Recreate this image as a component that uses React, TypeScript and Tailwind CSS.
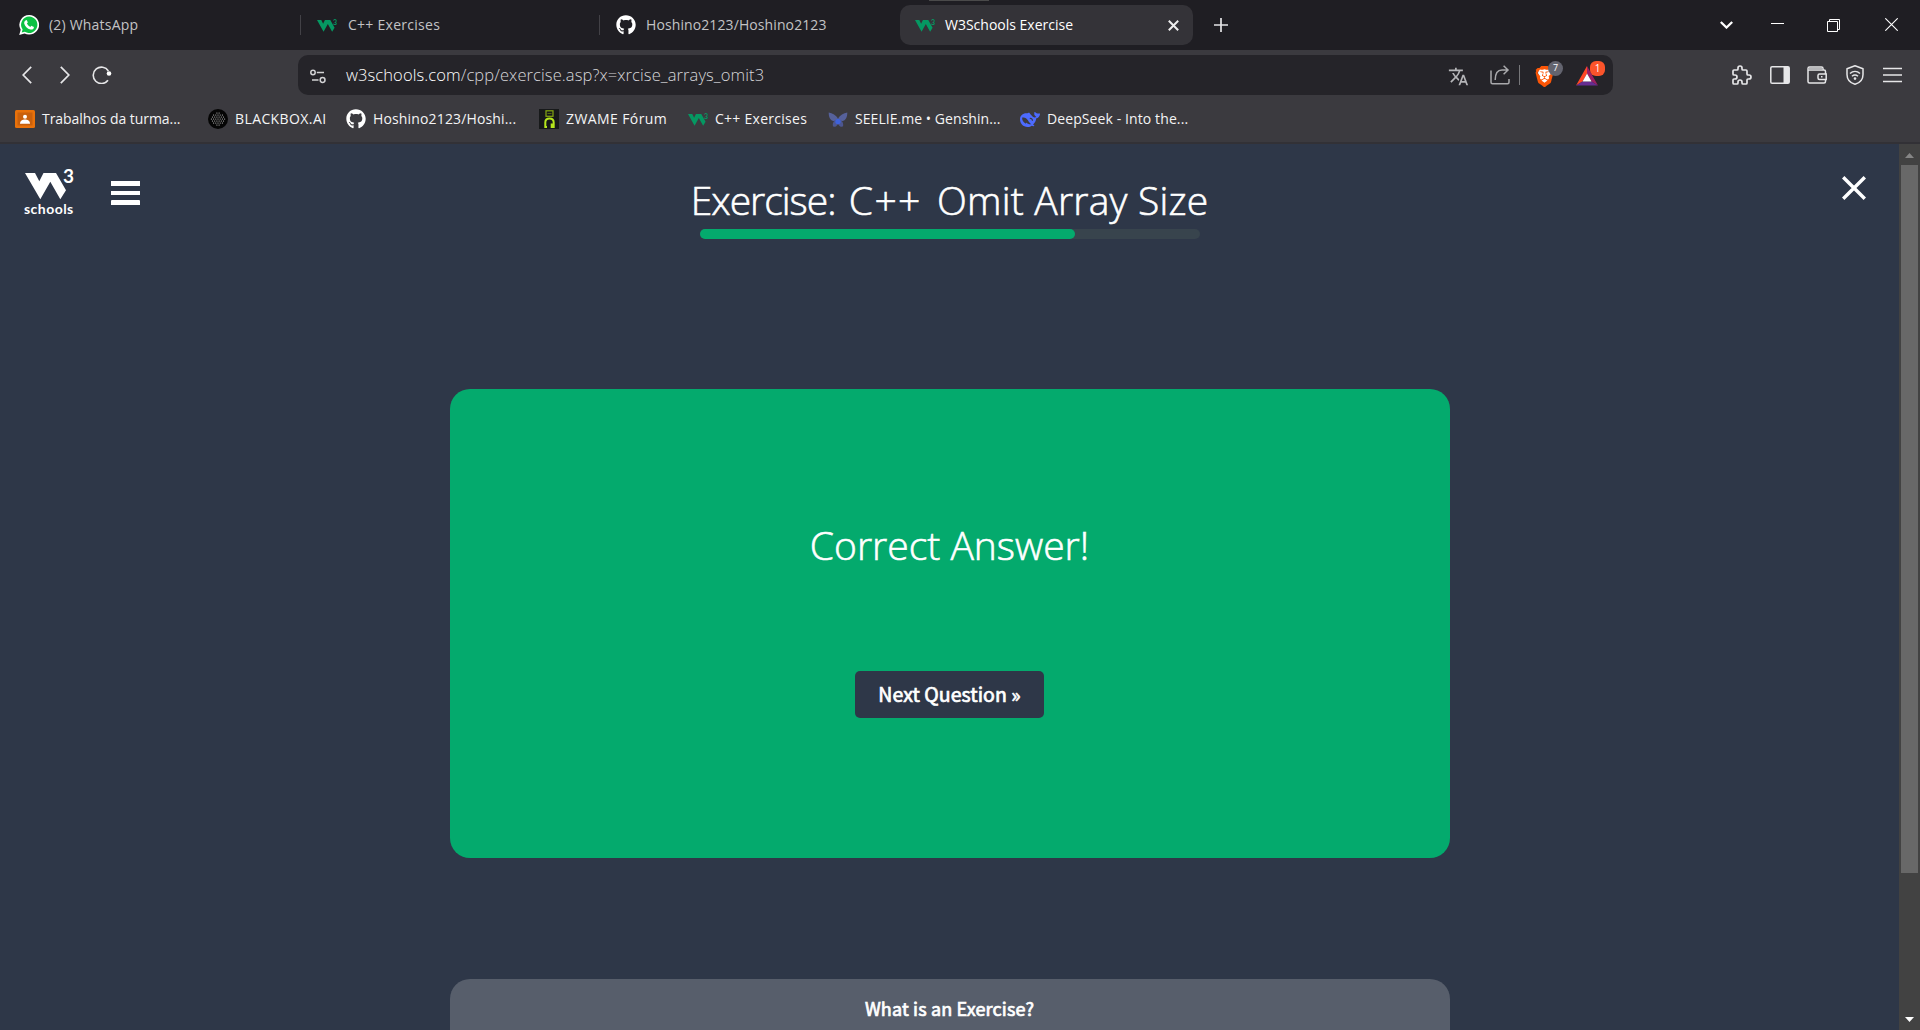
import React from 'react';
import { FaGithub } from 'react-icons/fa';
import { SiBrave } from 'react-icons/si';
import { MdTranslate } from 'react-icons/md';

type P = { className?: string };

const W3Mark = ({ className = '' }: P) => (
  <svg viewBox="0 0 42 27" className={className} fill="currentColor">
    <path d="M0 0H10L14.3 8.3L18.5 0H31L41 17.3L35.3 26.3L25.3 8.8L15.3 26.3Z" />
  </svg>
);

const W3Favicon = () => (
  <span className="flex h-5 w-5 shrink-0 items-start pt-[4px] font-['Lato'] text-[#059862]">
    <svg viewBox="0 0 42 27" className="mt-px h-[12px] w-[18px] shrink-0" fill="currentColor" preserveAspectRatio="none">
      <path d="M0 0H10L14.3 8.3L18.5 0H31L41 17.3L35.3 26.3L25.3 8.8L15.3 26.3Z" />
    </svg>
    <span className="-ml-[2px] -mt-px text-[7px] font-bold leading-[8px]">3</span>
  </span>
);

const WhatsApp = () => (
  <svg viewBox="0 0 20 20" className="h-5 w-5 shrink-0">
    <path d="M10.2 0a9.8 9.8 0 1 1-4.6 18.4L.2 20l1.5-5.3A9.8 9.8 0 0 1 10.2 0Z" fill="#fff" />
    <path d="M10.2 1.6a8.2 8.2 0 1 1-4.3 15.2L2.7 17.6l.9-3.1A8.2 8.2 0 0 1 10.2 1.6Z" fill="#0cc143" />
    <path d="M7 5.2c.5-.2.8 0 1 .4l.7 1.6c.2.5-.6 1.1-.8 1.4.8 1.5 1.9 2.6 3.500 3.300.4-.3.8-1.200 1.300-1l1.800.9c.5.3.4.6.3 1.100-.4 1.300-1.900 1.900-3.300 1.600-3.300-.8-5.600-3.200-6.300-6.100C5 7 5.700 5.700 7 5.200Z" fill="#fff" />
  </svg>
);

const Classroom = () => (
  <svg viewBox="0 0 20 18" className="h-[18px] w-5 shrink-0">
    <rect width="20" height="18" rx="1.500" fill="#e8710a" />
    <rect x="2.500" y="2.500" width="15" height="13" fill="#c9600c" />
    <circle cx="10" cy="6.800" r="2" fill="#fff" />
    <path d="M5 13.800c0-3.200 2.500-4.300 5-4.300s5 1.100 5 4.300Z" fill="#fff" />
  </svg>
);

const dots = [-3, -2, -1, 0, 1, 2, 3].flatMap((r) =>
  [-3, -2, -1, 0, 1, 2, 3].map((c) => [10 + c * 2.2 + (r % 2 ? 1.1 : 0), 10 + r * 2]),
).filter(([x, y]) => Math.hypot(x - 10, y - 10) < 6.7);

const Blackbox = () => (
  <svg viewBox="0 0 20 20" className="h-5 w-5 shrink-0">
    <circle cx="10" cy="10" r="10" fill="#050505" />
    {dots.map(([x, y]) => <circle key={`${x}-${y}`} cx={x} cy={y} r=".6" fill="#ccc" />)}
  </svg>
);

const Zwame = () => (
  <svg viewBox="0 0 20 20" className="h-5 w-5 shrink-0" fill="none">
    <rect width="20" height="20" fill="#17191a" />
    <rect x="7" y="1.800" width="7" height="5.500" stroke="#86a812" strokeWidth="1.200" />
    <path d="M8.500 4.500h4" stroke="#52680e" />
    <path d="M8 18H6.300V13.500C6.300 10.800 8 9.400 10.500 9.400s4.200 1.400 4.200 4.100V18H12.700V14.500" stroke="#b5e61d" strokeWidth="2" />
  </svg>
);

const Butterfly = () => (
  <svg viewBox="0 0 20 20" className="h-5 w-5 shrink-0">
    <path d="M10 9.500C8 6.500 4.500 4 .7 3.500c0 4.500 1.300 8 5.300 8.700Zm0 0c2-3 5.500-5.500 9.300-6 0 4.500-1.300 8-5.300 8.700Z" fill="#56619b" />
    <path d="M10 10c-3 1-5.500 2.700-5.200 6.500.3 2 3.200 2 5.200-1.500 2 3.500 4.900 3.500 5.200 1.500.3-3.800-2.200-5.500-5.200-6.500Z" fill="#4c5690" />
    <circle cx="10" cy="12.500" r="2.700" fill="#3e62dc" />
  </svg>
);

const DeepSeek = () => (
  <svg viewBox="0 0 20 20" className="h-5 w-5 shrink-0">
    <path d="M19.800 4.300c-.9.500-1.500.1-2.200.1-1.500.1-1.700-1.500-3.300-1.500.2 1.600-.3 2.200.2 3.200.4.9 1.200 1.200 1.800 1.900-1.300.7-2.300.5-3.500-.3C10.600 5.900 10 4.600 9 3.600c-.8.600-1.200.9-2.300.7C3 4.100 0 6.500 0 10.300c0 4.300 3.200 7.700 7.500 7.700 2 0 3.200-.6 4.300-1.300.9.500 2.300.7 2.600.1.200-.4-1.100-.9-1.300-1.400 2-1.700 3-4 3.200-6.100 1.900-.3 3.400-1.900 3.700-4.100Z" fill="#4d6bfe" />
    <path d="M2.200 8.600c2.600-.5 4.400.6 5.700 2.700 1 1.600 2 3.100 3.500 3.900-2.400.4-3.800-.6-4.700-1.200-.7-.5-.9.100-.7.800-2.800-1.300-4.200-3.700-3.800-6.200Z" fill="#3b3a3f" />
    <path d="M9.800 9.500c1.200-.4 2.600.4 2.700 2.200" stroke="#3b3a3f" strokeWidth="1.200" fill="none" />
  </svg>
);

const GitHub = () => <FaGithub className="h-5 w-5 shrink-0 text-white" />;

const tabs = [
  { icon: <WhatsApp />, title: '(2) WhatsApp', gap: 'ml-[10px]', track: 'tracking-[0.2px]' },
  { icon: <W3Favicon />, title: 'C++ Exercises', gap: 'ml-[11px]', track: 'tracking-[0.27px]' },
  { icon: <GitHub />, title: 'Hoshino2123/Hoshino2123', gap: 'ml-[10px]', track: 'tracking-[0.1px]' },
];

const bookmarks = [
  { icon: <Classroom />, title: 'Trabalhos da turma...', box: 'w-[193px]', track: 'tracking-[-0.05px]' },
  { icon: <Blackbox />, title: 'BLACKBOX.AI', box: 'w-[138px]', track: 'tracking-[0.4px]' },
  { icon: <GitHub />, title: 'Hoshino2123/Hoshi...', box: 'w-[193px]', track: 'tracking-[0.15px]' },
  { icon: <Zwame />, title: 'ZWAME Fórum', box: 'w-[149px]', track: 'tracking-[0.4px]' },
  { icon: <W3Favicon />, title: 'C++ Exercises', box: 'w-[140px]', track: 'tracking-[0.27px]' },
  { icon: <Butterfly />, title: 'SEELIE.me • Genshin...', box: 'w-[192px]', track: 'tracking-[0.05px]' },
  { icon: <DeepSeek />, title: 'DeepSeek - Into the...', box: 'w-[180px]', track: 'tracking-[0.1px]' },
];

const TabStrip = () => (
  <div className="relative flex h-[50px] items-center bg-[#1f1e23] text-sm text-[#c3c3c5]">
    <div className="absolute left-[929px] top-0 h-px w-[60px] bg-[#4a4a4a]" />
    {tabs.map((t, i) => (
      <div key={t.title} className={`flex h-5 items-center ${i === 0 ? 'w-[300px] pl-[19px]' : i === 1 ? 'w-[299px] border-l border-[#424146] pl-4' : 'w-[301px] border-l border-[#424146] pl-4'}`}>
        {t.icon}
        <span className={`whitespace-nowrap ${t.gap} ${t.track}`}>{t.title}</span>
      </div>
    ))}
    <div className="flex h-10 w-[293px] items-center rounded-[10px] bg-[#343338] pl-[15px] pr-[14px] text-white">
      <W3Favicon />
      <span className="ml-[10px] flex-1">W3Schools Exercise</span>
      <svg viewBox="0 0 11 11" className="h-[11px] w-[11px]" stroke="#eee" strokeWidth="2"><path d="M.8.800 10.200 10.200M10.200.800.800 10.200" /></svg>
    </div>
    <svg viewBox="0 0 14 14" className="ml-[21px] h-[14px] w-[14px]" stroke="#e4e4e6" strokeWidth="1.700"><path d="M7 0V14M0 7H14" /></svg>
    <div className="ml-auto flex items-center text-white">
      <svg viewBox="0 0 13 8" className="mr-[38px] h-2 w-[13px]" fill="none" stroke="currentColor" strokeWidth="2.300"><path d="M.8 1 6.500 6.500 12.200 1" /></svg>
      <div className="mb-[3px] mr-[43px] h-px w-[13px] bg-white" />
      <svg viewBox="0 0 13 13" className="mr-[45px] h-[13px] w-[13px]" fill="none" stroke="currentColor"><path d="M.5 2.500H10.500V12.500H.5ZM2.500 2.500V.5H12.500V10.500H10.500" /></svg>
      <svg viewBox="0 0 13 13" className="mb-px mr-[22px] h-[13px] w-[13px]" stroke="currentColor" strokeWidth="1.100"><path d="M.3.300 12.700 12.700M12.700.300.300 12.700" /></svg>
    </div>
  </div>
);

const Toolbar = () => (
  <div className="flex h-[50px] items-center text-[#e6e6e8]">
    <svg viewBox="0 0 10 18" className="ml-[22px] h-[18px] w-[10px]" fill="none" stroke="currentColor" strokeWidth="1.700"><path d="M9.200.800 1.200 9 9.200 17.200" /></svg>
    <svg viewBox="0 0 10 18" className="ml-[28px] h-[18px] w-[10px]" fill="none" stroke="currentColor" strokeWidth="1.700"><path d="M.8.800 8.800 9 .8 17.200" /></svg>
    <svg viewBox="0 0 20 18" className="ml-[22px] h-[18px] w-5" fill="none" stroke="currentColor" strokeWidth="1.600">
      <path d="M16 14.300A8.200 8.200 0 1 1 16.400 5" />
      <circle cx="17" cy="7.500" r="2.300" fill="#fff" stroke="none" />
    </svg>
    <div className="ml-[186px] flex h-10 w-[1315px] items-center rounded-[10px] bg-[#252429]">
      <svg viewBox="0 0 16 15" className="ml-[12px] mt-[2px] h-[15px] w-4" fill="none" stroke="#d2d2d4" strokeWidth="1.500">
        <circle cx="3" cy="3.500" r="2.200" /><path d="M6.800 3.500H14M2 11H8.500" /><circle cx="12.600" cy="11" r="2.400" />
      </svg>
      <div className="ml-5 flex-1 whitespace-nowrap text-[16.5px] font-light tracking-[0.1px] text-[#d6d6d9]"><span className="text-white">w3schools.com</span>/cpp/exercise.asp?x=xrcise_arrays_omit3</div>
      <MdTranslate className="mr-[21px] mt-[2px] h-[21px] w-[21px] text-[#b5b5b8]" />
      <svg viewBox="0 0 20 20" className="h-5 w-5" fill="none" stroke="#a9a9ac" strokeWidth="1.500">
        <path d="M1 5.500V17.200a1.500 1.500 0 0 0 1.500 1.500H17.500A1.500 1.500 0 0 0 19 17.200V14M5.200 15C5.200 8.500 8 5 12 5H18M13.600.800 18 5 13.600 9.200" />
      </svg>
      <div className="ml-[9px] h-5 w-px bg-[#77777a]" />
      <div className="relative ml-[15px] mt-[2px] h-[23px] w-5">
        <svg viewBox="0 0 20 23" className="absolute h-[23px] w-5"><path d="M4 3H15L17 8 14 17 10 20 6 17 3 8Z" fill="#fff" /></svg>
        <SiBrave className="absolute -left-px h-[23px] w-[21px] text-[#fb5607]" />
        <span className="absolute -top-[4px] left-[13px] flex h-[15px] w-[15px] items-center justify-center rounded-full bg-[#63646f] text-[9px] text-white">7</span>
      </div>
      <div className="relative ml-[21px] mr-[15px] mt-[2px] h-5 w-[22px]">
        <svg viewBox="0 0 22 20" className="h-5 w-[22px]">
          <path d="M11 0 0 19.500 6.500 15.500 11 7.500Z" fill="#ff4724" />
          <path d="M11 0 22 19.500 15.500 15.500 11 7.500Z" fill="#9e1f63" />
          <path d="M0 19.500H22L15.500 15.500H6.500Z" fill="#662d91" />
          <path d="M11 7.500 15.500 15.500H6.500Z" fill="#fff" />
        </svg>
        <span className="absolute -top-[5px] left-[14px] flex h-[15px] w-[15px] items-center justify-center rounded-[6px] bg-[#fb542b] text-[10px] text-white">1</span>
      </div>
    </div>
    <svg viewBox="1 1 22 22" className="ml-[118px] h-[22px] w-[22px]" fill="none" stroke="currentColor" strokeWidth="1.700" strokeLinejoin="round">
      <path d="M4 7h3a1 1 0 0 0 1 -1v-1a2 2 0 0 1 4 0v1a1 1 0 0 0 1 1h3a1 1 0 0 1 1 1v3a1 1 0 0 0 1 1h1a2 2 0 0 1 0 4h-1a1 1 0 0 0 -1 1v3a1 1 0 0 1 -1 1h-3a1 1 0 0 1 -1 -1v-1a2 2 0 0 0 -4 0v1a1 1 0 0 1 -1 1h-3a1 1 0 0 1 -1 -1v-3a1 1 0 0 1 1 -1h1a2 2 0 0 0 0 -4h-1a1 1 0 0 1 -1 -1v-3a1 1 0 0 1 1 -1" />
    </svg>
    <svg viewBox="0 0 20 18" className="ml-[17px] h-[18px] w-5" fill="none" stroke="currentColor" strokeWidth="1.500"><rect x=".8" y=".8" width="18.400" height="16.400" rx="1.300" /><path d="M13.500 1H19V17H13.500Z" fill="currentColor" stroke="none" /></svg>
    <svg viewBox="0 0 20 18" className="ml-[17px] h-[18px] w-5" fill="none" stroke="currentColor" strokeWidth="1.500">
      <path d="M18.500 8V5.500A1.500 1.500 0 0 0 17 4H1V15.500A1.500 1.500 0 0 0 2.500 17H17A1.500 1.500 0 0 0 18.500 15.500V14M1 4V2.500A1.500 1.500 0 0 1 2.500 1H14.500A1.500 1.500 0 0 1 16 2.500V4" />
      <path d="M1.500 2H15.500V4H1.500Z" fill="#b5b5b8" stroke="none" />
      <path d="M19.200 8H12.500A1.500 1.500 0 0 0 11 9.500V12A1.500 1.500 0 0 0 12.500 13.500H19.200ZM14 10.800H15.500" />
    </svg>
    <svg viewBox="0 0 18 20" className="ml-[19px] h-5 w-[18px]" fill="none" stroke="currentColor" strokeWidth="1.500">
      <path d="M9 .8 17 3.800V9.500C17 14.500 13.500 18 9 19.300 4.500 18 1 14.500 1 9.500V3.800Z" strokeLinejoin="round" />
      <path d="M4 8.500C7 5.700 11 5.700 14 8.500M6 11.200C8 9.500 10 9.500 12 11.200" /><circle cx="9" cy="13.600" r="1.300" fill="currentColor" stroke="none" />
    </svg>
    <svg viewBox="0 0 19 16" className="ml-[19px] h-4 w-[19px]" stroke="currentColor" strokeWidth="1.700"><path d="M0 1.500H19M0 8H19M0 14.500H19" /></svg>
  </div>
);

const Page = () => (
  <main className="flex min-w-0 flex-1 flex-col bg-[#2e3748] text-white">
    <header className="grid h-[106px] grid-cols-[1fr_520px_1fr] items-start">
      <div className="flex">
        <div className="ml-[25px] mt-[24px] flex w-[49px] flex-col font-['Lato']">
          <div className="flex h-[31px]">
            <W3Mark className="mt-[5px] h-[27px] w-[42px] shrink-0" />
            <span className="-ml-[4px] -mt-px text-[19px] font-bold leading-[18px]">3</span>
          </div>
          <span className="-ml-px mt-px text-[14px] font-bold leading-[18px] tracking-[0.45px]">schools</span>
        </div>
        <div className="ml-[37px] mt-[37px] flex h-6 w-[29px] flex-col justify-between">
          <div className="h-[5px] bg-white" /><div className="h-[4px] bg-white" /><div className="h-[5px] rounded-t-[1px] bg-white" />
        </div>
      </div>
      <div className="flex flex-col items-center pt-[32px]">
        <h1 className="whitespace-nowrap text-[39px] font-light leading-[48px] tracking-[0.2px] [-webkit-text-stroke:0.6px_white]">
          <span className="mr-[3px] tracking-[-1px]">Exercise:</span> <span className="mr-[5px] tracking-[1.4px]">C++</span> Omit Array Size
        </h1>
        <div className="mt-[5px] h-[10px] w-[500px] rounded-full bg-[#38444d]"><div className="h-full w-3/4 rounded-full bg-[#04aa6d]" /></div>
      </div>
      <svg viewBox="0 0 24 24" className="mr-[33px] mt-8 h-6 w-6 justify-self-end" stroke="currentColor" strokeWidth="3.400"><path d="M1.200 1.200 22.800 22.800M22.800 1.200 1.200 22.800" /></svg>
    </header>
    <section className="mx-auto mt-[139px] flex h-[469px] w-[1000px] shrink-0 flex-col items-center rounded-[20px] bg-[#04aa6d]">
      <h2 className="mt-[129px] whitespace-nowrap text-[39px] font-light leading-[54px] [-webkit-text-stroke:0.6px_white]">Correct Answer!</h2>
      <button className="mt-[99px] h-[47px] w-[189px] whitespace-nowrap rounded-[5px] bg-[#2e3748] pb-[2px] font-['Noto_Sans_CJK_SC'] text-[19.5px] leading-[45px] tracking-[0.05px] [-webkit-text-stroke:0.7px_white]">Next Question »</button>
    </section>
    <section className="mx-auto mt-[121px] h-[51px] w-[1000px] shrink-0 rounded-t-[20px] bg-[#575e6b] pt-[15px] text-center font-['Noto_Sans_CJK_SC'] text-[18px] leading-[28px] tracking-[0.15px] [-webkit-text-stroke:0.7px_white]">What is an Exercise?</section>
  </main>
);

const Scrollbar = () => (
  <div className="flex w-[21px] flex-col items-center bg-[#424242] pr-px">
    <svg viewBox="0 0 9 5" className="mt-[9px] h-[5px] w-[9px]" fill="#868686"><path d="M0 5 4.500 0 9 5Z" /></svg>
    <div className="mt-[7px] h-[708px] w-[17px] bg-[#686868]" />
    <svg viewBox="0 0 9 5" className="mb-2 mt-auto h-[5px] w-[9px]" fill="#fff"><path d="M0 0H9L4.500 5Z" /></svg>
  </div>
);

export default function App() {
  return (
    <div className="flex h-[1030px] w-[1920px] flex-col overflow-hidden bg-[#3b3a3f] font-['Open_Sans','Noto_Sans',sans-serif]">
      <TabStrip />
      <Toolbar />
      <div className="flex h-[44px] items-start border-b-2 border-[#323136] pl-[15px] text-sm text-[#f4f4f5]">
        {bookmarks.map((b) => (
          <div key={b.title} className={`flex h-[38px] items-center ${b.box}`}>
            {b.icon}
            <span className={`ml-[7px] whitespace-nowrap ${b.track}`}>{b.title}</span>
          </div>
        ))}
      </div>
      <div className="flex min-h-0 flex-1">
        <Page />
        <Scrollbar />
      </div>
    </div>
  );
}
